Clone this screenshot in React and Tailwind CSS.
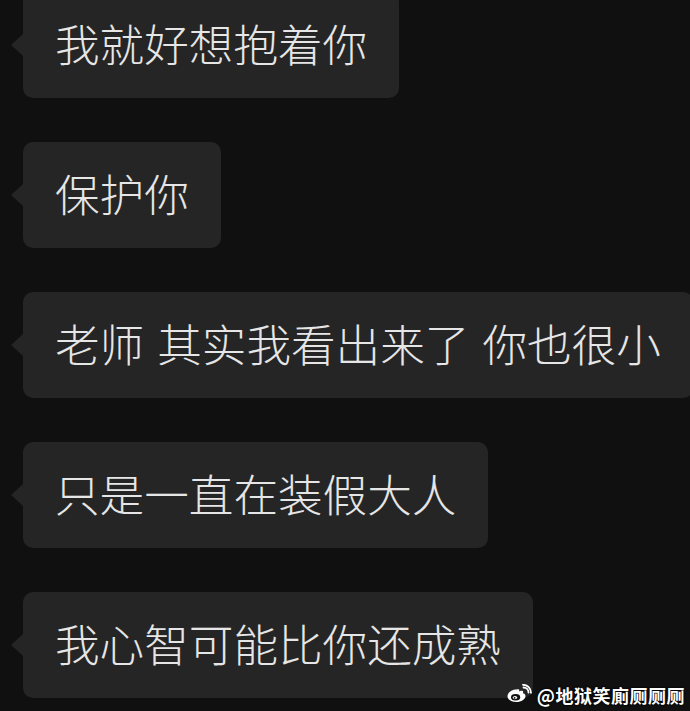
import React from "react";

const FONT = {
  fontFamily: '"Noto Sans CJK SC", "Noto Sans", sans-serif',
};

const messages = [
  { id: 1, parts: ["我就好想抱着你"] },
  { id: 2, parts: ["保护你"] },
  { id: 3, parts: ["老师", "其实我看出来了", "你也很小"] },
  { id: 4, parts: ["只是一直在装假大人"] },
  { id: 5, parts: ["我心智可能比你还成熟"] },
];

const Bubble = ({ parts }) => (
  <div className="relative flex pl-[23px]">
    {/* tail */}
    <div className="absolute left-[11px] top-1/2 -translate-y-1/2 w-0 h-0 border-y-[11px] border-y-transparent border-r-[12px] border-r-[#252525]" />
    <div className="h-[106px] flex items-center gap-[13px] px-[32px] pb-[5px] bg-[#252525] rounded-[10px] text-[44.6px] leading-[44px] font-light text-[#e6e6e6] whitespace-nowrap shrink-0">
      {parts.map((p, i) => (
        <span key={i}>{p}</span>
      ))}
    </div>
  </div>
);

const WeiboLogo = () => (
  <svg width="26" height="20" viewBox="0 0 26 20">
    <path
      d="M10.5 6.5c-4.5 0-9 3.2-9 6.8 0 3.5 4.2 5.7 8.7 5.7 5.2 0 9.3-2.7 9.3-6 0-1.8-1.4-2.6-2.6-2.8.6-1.2.4-2.5-1.3-2.5-1 0-2 .5-2.6.8.6-1.5.2-2.300-.8-2.3-.6 0-1.2.2-1.7.3z"
      fill="#fff"
      transform="translate(0 -1)"
    />
    <ellipse cx="9.6" cy="13.3" rx="4.6" ry="3.3" fill="#111" />
    <ellipse cx="9" cy="13.6" rx="2.2" ry="1.7" fill="#fff" />
    <circle cx="8.6" cy="13.9" r="0.9" fill="#111" />
    <path d="M17.5 3.5a5 5 0 0 1 5 5" stroke="#fff" strokeWidth="1.8" fill="none" strokeLinecap="round" />
    <path d="M17 0.8a8 8 0 0 1 8 8" stroke="#fff" strokeWidth="1.8" fill="none" strokeLinecap="round" />
  </svg>
);

export default function App() {
  return (
    <div
      className="relative w-[690px] h-[711px] overflow-hidden bg-[#101010]"
      style={FONT}
    >
      <div className="flex flex-col gap-[44px] -mt-[8px]">
        {messages.map((m) => (
          <Bubble key={m.id} parts={m.parts} />
        ))}
      </div>

      {/* watermark */}
      <div className="absolute right-[5px] bottom-[7px] flex items-end gap-[5px] text-white">
        <WeiboLogo />
        <span className="text-[18px] leading-[18px] font-bold tracking-[0.5px] [text-shadow:0_0_2px_#000,0_0_2px_#000]">
          @地狱笑廁厕厕厕
        </span>
      </div>
    </div>
  );
}
